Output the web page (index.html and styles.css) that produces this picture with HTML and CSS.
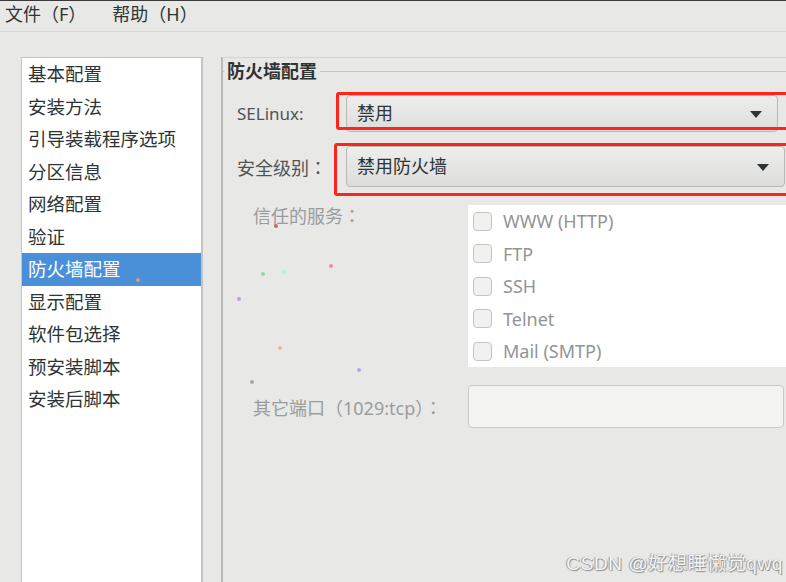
FILE: index.html
```html
<html>

<head>
<link rel="stylesheet" href="styles.css">
</head>

<body>
<div class="menubar">
    <span class="menu">文件（F）</span>
    <span class="menu">帮助（H）</span>
</div>

<div class="main">
    <ul class="sidebar">
        <li>基本配置</li>
        <li>安装方法</li>
        <li>引导装载程序选项</li>
        <li>分区信息</li>
        <li>网络配置</li>
        <li>验证</li>
        <li class="selected">防火墙配置</li>
        <li>显示配置</li>
        <li>软件包选择</li>
        <li>预安装脚本</li>
        <li>安装后脚本</li>
    </ul>

    <div class="panel">
        <fieldset class="group">
            <legend>防火墙配置</legend>

            <div class="form-row row-selinux">
                <span class="label">SELinux:</span>
                <div class="combo">禁用<span class="arrow"></span></div>
                <div class="mark"></div>
            </div>

            <div class="form-row row-level">
                <span class="label cjk">安全级别<span class="colon">：</span></span>
                <div class="combo">禁用防火墙<span class="arrow"></span></div>
                <div class="mark"></div>
            </div>

            <div class="form-row row-services">
                <span class="label dim">信任的服务<span class="colon">：</span></span>
                <ul class="services">
                    <li><span class="check"></span>WWW (HTTP)</li>
                    <li><span class="check"></span>FTP</li>
                    <li><span class="check"></span>SSH</li>
                    <li><span class="check"></span>Telnet</li>
                    <li><span class="check"></span>Mail (SMTP)</li>
                </ul>
            </div>

            <div class="form-row row-port">
                <span class="label dim">其它端口（1029:tcp）<span class="colon">：</span></span>
                <div class="entry"></div>
            </div>
        </fieldset>
    </div>
</div>

<!-- stray coloured specks in the capture -->
<div class="dots">
    <i style="left:136px;top:278px;background:#e8957c"></i>
    <i style="left:274px;top:224px;background:#c46a6a"></i>
    <i style="left:261px;top:272px;background:#8fd8a8"></i>
    <i style="left:282px;top:270px;background:#a8f4f0"></i>
    <i style="left:329px;top:264px;background:#f08aa0"></i>
    <i style="left:237px;top:297px;background:#c89ae0"></i>
    <i style="left:278px;top:346px;background:#f4b48c"></i>
    <i style="left:357px;top:368px;background:#a8a8ec"></i>
    <i style="left:250px;top:380px;background:#a0a8b0"></i>
</div>

<div class="watermark">CSDN @好想睡懒觉qwq</div>

</body>

</html>
```

FILE: styles.css
```css
html, body {
    margin: 0;
    height: 100%;
}

body {
    background: #e8e8e7;
    color: #2e3436;
    font-family: "Noto Sans", "Noto Sans CJK SC", sans-serif;
    display: flex;
    flex-direction: column;
    overflow: hidden;
    position: relative;
}

/* menu bar */
.menubar {
    height: 30px;
    border-top: 1px solid #3a3a3a;
    border-bottom: 1px solid #d6d6d5;
    display: flex;
    align-items: flex-start;
    padding-left: 5px;
    font-size: 18px;
    line-height: 26px;
}
.menu {
    margin-right: 26px;
}

.main {
    flex: 1;
    display: flex;
    padding: 25px 0 0 21px;
}

/* left page list */
.sidebar {
    list-style: none;
    margin: 0 0 -20px 0;
    padding: 0;
    width: 179px;
    background: white;
    border: 1px solid #c4c4c3;
    border-right-width: 2px;
    font-size: 18.5px;
}
.sidebar li {
    height: 32.5px;
    line-height: 32px;
    padding-left: 6px;
}
.sidebar li.selected {
    background: #4a90d9;
    color: white;
}

/* right page */
.panel {
    flex: 1;
    margin-left: 18px;
    border-top: 1px solid #d4d4d3;
    border-left: 2px solid #b9b9b8;
}

.group {
    margin: 0;
    padding: 0 0 0 14px;
    border: none;
    border-top: 1px solid #c6c6c5;
    height: 100%;
}
.group legend {
    font-weight: bold;
    font-size: 18px;
    padding: 0 3px;
    margin-left: -13px;
    line-height: 26px;
}

.form-row {
    display: flex;
    position: relative;
}
.label {
    font-size: 17px;
    color: #505455;
}
.label.cjk {
    font-size: 18px;
}
.label.dim {
    color: #9a9c9d;
    font-size: 18px;
    padding-left: 16px;
    width: 215px;
    flex-shrink: 0;
}
/* centred full-width colon, as the GTK font draws it */
.colon {
    font-family: "Noto Sans CJK TC", sans-serif;
}

.row-selinux,
.row-level {
    align-items: center;
}
.row-selinux .label,
.row-level .label {
    width: 109px;
    flex-shrink: 0;
}
.row-selinux {
    margin-top: 11px;
}
.row-level {
    margin-top: 14px;
}

.combo {
    flex: 1;
    position: relative;
    height: 35px;
    line-height: 35px;
    padding-left: 10px;
    font-size: 18px;
    background: linear-gradient(#eeeeed, #dcdcdb);
    border: 1px solid #b8b8b7;
    border-radius: 4px;
    margin-right: 8px;
}
.row-level .combo {
    height: 39px;
    line-height: 39px;
    margin-right: 1px;
}
.arrow {
    position: absolute;
    right: 15px;
    top: 50%;
    margin-top: -3px;
    border-left: 6px solid transparent;
    border-right: 6px solid transparent;
    border-top: 7px solid #2e3436;
}

/* red annotation boxes */
.mark {
    position: absolute;
    border: 3px solid #ff2419;
    border-radius: 3px;
    right: -12px;
    pointer-events: none;
}
.row-selinux .mark {
    left: 99px;
    top: -3px;
    bottom: 2px;
}
.row-level .mark {
    left: 97px;
    top: -3px;
    bottom: -9px;
}

.row-services {
    margin-top: 18px;
    align-items: flex-start;
}
.row-services .label {
    margin-top: -3px;
}
.services {
    list-style: none;
    margin: 0;
    padding: 0;
    flex: 1;
    background: white;
    height: 162px;
}
.services li {
    height: 32.5px;
    display: flex;
    align-items: center;
    padding-left: 5px;
    font-size: 18px;
    color: #929495;
}
.check {
    width: 17px;
    height: 17px;
    border: 1px solid #c4c4c3;
    border-radius: 4px;
    background: #f1f1f0;
    margin-right: 11px;
}

.row-port {
    margin-top: 18px;
    align-items: center;
}
.entry {
    flex: 1;
    height: 41px;
    background: #f3f3f2;
    border: 1px solid #c8c8c7;
    border-radius: 4px;
    margin-right: 2px;
}

.dots i {
    position: absolute;
    width: 4px;
    height: 4px;
    border-radius: 50%;
}

.watermark {
    position: absolute;
    right: 3px;
    bottom: 7px;
    font-family: "Liberation Sans", "Noto Sans CJK SC", sans-serif;
    font-size: 19px;
    letter-spacing: 0.6px;
    color: #f4f4f4;
    text-shadow: 1px 1px 1px #8a8a8a, -1px 0 1px #9a9a9a;
}
```
